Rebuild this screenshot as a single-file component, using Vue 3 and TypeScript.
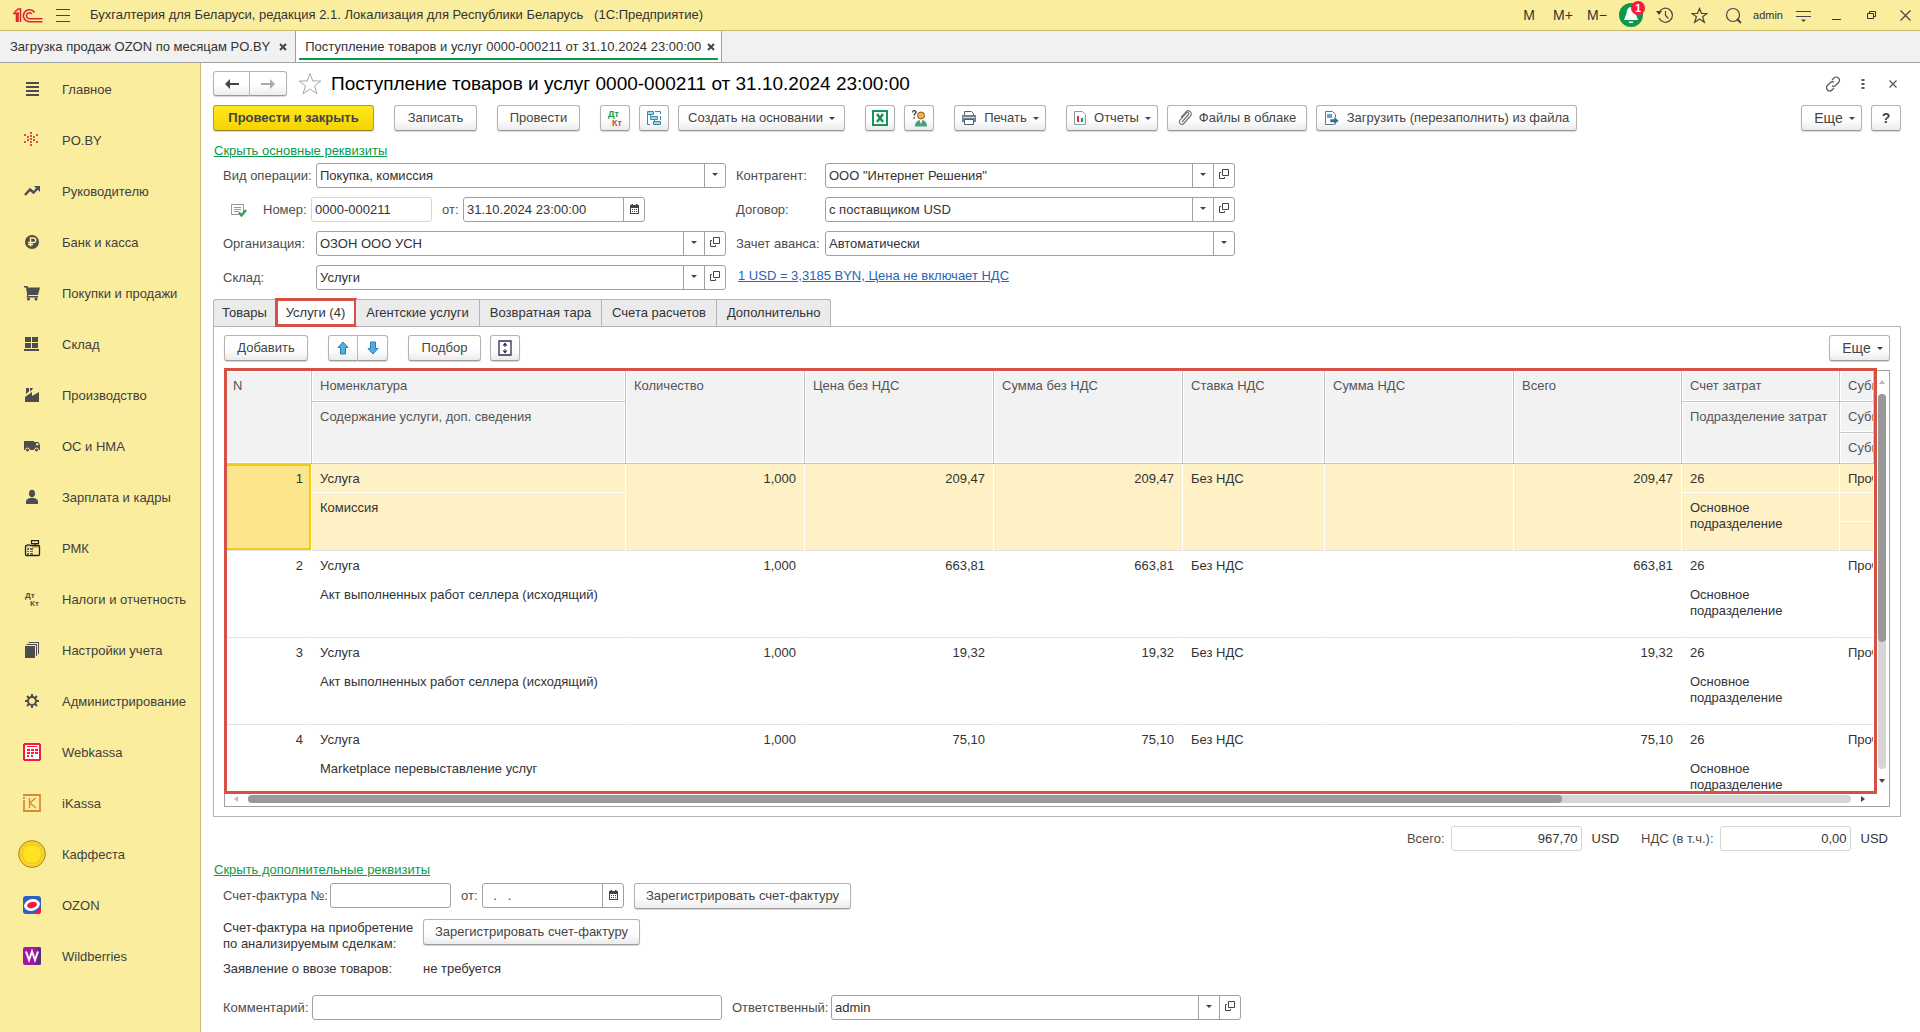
<script setup lang="ts">
import { ref } from 'vue'

interface Section {
  title: string
  icon: string
}

interface ServiceLine {
  n: number
  item: string
  note: string
  qty: string
  price: string
  amount: string
  rate: string
  total: string
  account: string
  department: string
  extra: string
}

const dark = '#4d4d4d'

const sections: Section[] = [
  { title: 'Главное', icon: `<path fill="${dark}" d="M8 7h13v2H8zM8 11h13v2H8zM8 15h13v2H8zM8 19h13v2H8z"/>` },
  {
    title: 'PO.BY',
    icon: '<path fill="#d9513f" d="M12 6h2v2h-2zM6 8h2v2H6zM18 8h2v2h-2zM9 10h2v2H9zM15 10h2v2h-2zM12 9h2v2h-2zM12 12h2v2h-2zM12 15h2v2h-2zM9 13h2v2H9zM15 13h2v2h-2zM6 15h2v2H6zM18 15h2v2h-2zM12 18h2v2h-2z"/>'
  },
  {
    title: 'Руководителю',
    icon: `<path fill="none" stroke="${dark}" stroke-width="2.400" d="M7 18l5-5.500 3.500 3L20 11"/><path fill="${dark}" d="M16 9h6v6z"/>`
  },
  {
    title: 'Банк и касса',
    icon: `<circle cx="14" cy="14" r="7" fill="${dark}"/><path fill="none" stroke="#faec9f" stroke-width="1.500" d="M12.500 18.500V10h3a2.200 2.200 0 0 1 0 4.500H10M10 16.500h5"/>`
  },
  {
    title: 'Покупки и продажи',
    icon: `<path fill="${dark}" d="M6 7h3.500l.5 1.500h12l-2 7.500H10.500l-.3 1H20v1.500H8.500l.7-2.800L8 8.500H6z"/><circle cx="10.500" cy="20" r="1.500" fill="${dark}"/><circle cx="18" cy="20" r="1.500" fill="${dark}"/>`
  },
  { title: 'Склад', icon: `<path fill="${dark}" d="M7 7h6v5H7zM14 7h6v5h-6zM7 13h6v5H7zM14 13h6v5h-6zM6 19h15v2H6z"/>` },
  { title: 'Производство', icon: `<path fill="${dark}" d="M7 21v-5l7-5v4l7-4v10zM8 7h3v3.500l-3 2.500zM12 7h3l-1 2-2 1.500z"/>` },
  {
    title: 'ОС и НМА',
    icon: `<path fill="${dark}" d="M6 9h10v9H6zM16 10h4.500l1.500 3v5h-6z"/><path fill="#faec9f" d="M18 11.300h2l.8 2H18z"/><circle cx="9.500" cy="18" r="2" fill="${dark}" stroke="#faec9f"/><circle cx="18.500" cy="18" r="2" fill="${dark}" stroke="#faec9f"/>`
  },
  {
    title: 'Зарплата и кадры',
    icon: `<ellipse cx="14" cy="10.500" rx="3" ry="3.800" fill="${dark}"/><path fill="${dark}" d="M8 21v-2.500q0-2.500 4-3.500h4q4 1 4 3.500V21z"/>`
  },
  {
    title: 'РМК',
    icon: '<rect x="7.500" y="11.500" width="14" height="10" rx="1" fill="#f6eaa6" stroke="#222" stroke-width="1.300"/><path fill="#faec9f" stroke="#222" stroke-width="1.200" d="M13.500 6.600h7v3h-7zM17 9.600v2"/><path fill="#6b6b57" d="M9 10h3v2H9zM9 14h6v7H9z"/><path stroke="#f6eaa6" d="M9 16.500h6M9 18.500h6M11.500 14v7"/><path fill="#a08c20" d="M14 12h7v1.500h-7z"/>'
  },
  {
    title: 'Налоги и отчетность',
    icon: `<g fill="${dark}" font-family="Liberation Sans, Arial, sans-serif" font-weight="700" font-size="8"><text x="7" y="13">Дт</text><text x="12" y="21">Кт</text></g>`
  },
  {
    title: 'Настройки учета',
    icon: `<path fill="${dark}" d="M7 10h10v12H7zM8.500 8H19v12h-1V9H8.500zM10.500 6H21v12h-1V7h-9.500z"/>`
  },
  {
    title: 'Администрирование',
    icon: `<circle cx="14" cy="14" r="4" fill="none" stroke="${dark}" stroke-width="2"/><path stroke="${dark}" stroke-width="2" d="M14 7v2.500M14 18.500V21M7 14h2.500M18.500 14H21M9 9l2 2M17 17l2 2M9 19l2-2M17 11l2-2"/>`
  },
  {
    title: 'Webkassa',
    icon: '<path fill="#fb1740" d="M6 5h16v1h1v16h-1v1H6v-1H5V6h1z"/><path fill="#fff" d="M7 7h14v14H7z"/><path fill="#fb1740" d="M9 8h10v1H9zM9 11h3v2H9zM13 11h3v2h-3zM17 11h3v2h-3zM9 14h3v2H9zM13 14h3v2h-3zM17 14h3v2h-3zM9 17h2v2H9zM13 17h2v2h-2z"/>'
  },
  {
    title: 'iKassa',
    icon: '<path fill="none" stroke="#d98a35" stroke-width="1.800" d="M5 6h17v16H6V11M6 8v2"/><path fill="none" stroke="#d98a35" stroke-width="1.400" d="M11.500 9v10M17.500 9l-5.500 5 6 5"/>'
  },
  {
    title: 'Каффеста',
    icon: '<circle cx="14" cy="14" r="13.400" fill="#fad02c" stroke="#a38a1c"/><circle cx="14" cy="14" r="9.500" fill="#ffe423" stroke="#f3c61a"/>'
  },
  {
    title: 'OZON',
    icon: '<rect x="5" y="5" width="18" height="18" rx="3" fill="#2a5fc4"/><path fill="#f7173c" d="M8 23c8 0 13-3 15-7v4a3 3 0 0 1-3 3z"/><ellipse cx="14" cy="14" rx="8" ry="5.800" fill="#fff" transform="rotate(-14 14 14)"/><ellipse cx="14" cy="14" rx="5" ry="3.200" fill="#f7173c" transform="rotate(-14 14 14)"/>'
  },
  {
    title: 'Wildberries',
    icon: '<rect x="5" y="5" width="18" height="18" rx="2" fill="#a017a5"/><path fill="#5c2a80" d="M20 5h1a2 2 0 0 1 2 2v14a2 2 0 0 1-2 2h-4z"/><path fill="none" stroke="#fff" stroke-width="2" d="M8 9.500l3 8.500 3-8.500 3 8.500 3-8.500"/>'
  }
]

const documentTabs = ['Товары', 'Услуги (4)', 'Агентские услуги', 'Возвратная тара', 'Счета расчетов', 'Дополнительно']
const activeTab = ref(1)
const selectedLine = ref(1)

const base = { item: 'Услуга', qty: '1,000', rate: 'Без НДС', account: '26', department: 'Основное подразделение', extra: 'Прочие затраты' }
const lines: ServiceLine[] = [
  { ...base, n: 1, note: 'Комиссия', price: '209,47', amount: '209,47', total: '209,47' },
  { ...base, n: 2, note: 'Акт выполненных работ селлера (исходящий)', price: '663,81', amount: '663,81', total: '663,81' },
  { ...base, n: 3, note: 'Акт выполненных работ селлера (исходящий)', price: '19,32', amount: '19,32', total: '19,32' },
  { ...base, n: 4, note: 'Marketplace перевыставление услуг', price: '75,10', amount: '75,10', total: '75,10' }
]
</script>

<template>
  <div class="app">
    <header class="titlebar">
      <svg class="logo" width="30" height="15" viewBox="0 0 30 15" fill="none" stroke="#e0262d" stroke-width="1.600">
        <path d="M0 5.500h3.500V14M1.500 4.500L5 1h2.500v13M5 4v10" />
        <path d="M21.500 4.500A6 6 0 1 0 16 13.700h13.500M18.800 5.800a3 3 0 1 0-2.300 4.900h13" />
      </svg>
      <button class="plain burger" aria-label="Меню">
        <svg width="14" height="16" viewBox="0 0 14 16" stroke="#444"><path d="M0 2.500h14M0 8.500h14M0 14.500h14" /></svg>
      </button>
      <span class="app-title">Бухгалтерия для Беларуси, редакция 2.1. Локализация для Республики Беларусь&nbsp;&nbsp; (1С:Предприятие)</span>
      <div class="title-actions">
        <button class="plain mem">M</button>
        <button class="plain mem">M+</button>
        <button class="plain mem">M−</button>
        <button class="plain bell" aria-label="Оповещения">
          <svg width="24" height="24" viewBox="0 0 24 24"><circle cx="12" cy="12" r="12" fill="#0b9a49" /><path fill="#fff" d="M12 4c3 0 4 3 4.500 6.500L19 17H5l2.500-6.500C8 7 9 4 12 4zM9.500 18.500h5l-1 1.500h-3z" /></svg>
          <span class="badge">1</span>
        </button>
        <button class="plain" aria-label="История">
          <svg width="18" height="18" viewBox="0 0 18 18" fill="none" stroke="#444" stroke-width="1.200"><path d="M3 6.500a7 7 0 1 1 0 5.500M9.500 5v4.500l3 3" /><path fill="#444" stroke="none" d="M0 5h6L3 9z" /></svg>
        </button>
        <button class="plain" aria-label="Избранное">
          <svg width="17" height="17" viewBox="0 0 17 17" fill="none" stroke="#444" stroke-width="1.200"><path d="M8.500 1.500l2 5h5.500l-4.400 3.300 1.700 5.400-4.800-3.300-4.800 3.300 1.700-5.400L1 6.500h5.500z" /></svg>
        </button>
        <button class="plain" aria-label="Поиск">
          <svg width="17" height="17" viewBox="0 0 17 17" fill="none" stroke="#444" stroke-width="1.200"><circle cx="8" cy="8" r="6.500" /><path stroke-width="2" d="M12 12l4 4" /></svg>
        </button>
        <button class="plain user">admin</button>
        <button class="plain" aria-label="Сервис">
          <svg width="15" height="15" viewBox="0 0 15 15"><path stroke="#444" stroke-width="1.200" d="M0 3.500h15M0 8.500h15" /><path fill="#444" d="M5 11.500h5L7.500 14z" /></svg>
        </button>
        <button class="plain" aria-label="Свернуть">
          <svg width="10" height="10" viewBox="0 0 10 10" stroke="#333"><path d="M0 9.500h9" /></svg>
        </button>
        <button class="plain restore" aria-label="Восстановить">
          <svg width="10" height="10" viewBox="0 0 10 10" fill="none" stroke="#333"><path d="M.5 3.500h6v5h-6zM2.500 3V1.500h6v5H7" /></svg>
        </button>
        <button class="plain close" aria-label="Закрыть">
          <svg width="11" height="11" viewBox="0 0 11 11" stroke="#444" stroke-width="1.200"><path d="M.5.5l10 10M10.500.5l-10 10" /></svg>
        </button>
      </div>
    </header>

    <nav class="windows">
      <div class="window-tab">
        <a href="#ozon">Загрузка продаж OZON по месяцам PO.BY</a>
        <button class="plain" aria-label="Закрыть вкладку"><svg width="8" height="8" viewBox="0 0 8 8" stroke="#444" stroke-width="2"><path d="M1 1l6 6M7 1L1 7" /></svg></button>
      </div>
      <div class="window-tab current">
        <a href="#receipt">Поступление товаров и услуг 0000-000211 от 31.10.2024 23:00:00</a>
        <button class="plain" aria-label="Закрыть вкладку"><svg width="8" height="8" viewBox="0 0 8 8" stroke="#444" stroke-width="2"><path d="M1 1l6 6M7 1L1 7" /></svg></button>
      </div>
    </nav>

    <div class="workspace">
      <aside class="sidebar">
        <a v-for="s in sections" :key="s.title" href="#section" class="section">
          <svg width="28" height="29" viewBox="0 0 28 29" v-html="s.icon"></svg>
          <span>{{ s.title }}</span>
        </a>
      </aside>

      <main class="document">
        <div class="doc-head">
          <div class="btn-group">
            <button class="btn history" aria-label="Назад"><svg width="16" height="12" viewBox="0 0 16 12"><path fill="#444" d="M1 6l5-5v4h9v2H6v4z" /></svg></button>
            <button class="btn history" aria-label="Вперед"><svg width="16" height="12" viewBox="0 0 16 12"><path fill="#aaa" d="M15 6l-5-5v4H1v2h9v4z" /></svg></button>
          </div>
          <button class="plain fav" aria-label="В избранное">
            <svg width="24" height="24" viewBox="0 0 24 24" fill="#fff" stroke="#a8a8a8"><path d="M12 1.500l2.800 7.500h8l-6.300 4.800 2.400 8-6.900-4.800-6.900 4.800 2.400-8L1.200 9h8z" /></svg>
          </button>
          <h1>Поступление товаров и услуг 0000-000211 от 31.10.2024 23:00:00</h1>
          <div class="head-tools">
            <button class="plain" aria-label="Ссылка">
              <svg width="16" height="16" viewBox="0 0 16 16" fill="none" stroke="#555" stroke-width="1.200"><path d="M7 4l2-2a3 3 0 0 1 4.500 0 3 3 0 0 1 0 4.500L10.500 9.500a3 3 0 0 1-3.500.3M9 12l-2 2a3 3 0 0 1-4.500 0 3 3 0 0 1 0-4.500L5.500 6.500A3 3 0 0 1 9 6.200" /></svg>
            </button>
            <button class="plain" aria-label="Действия"><svg width="4" height="12" viewBox="0 0 4 12" fill="#555"><path d="M.5 1h3v2h-3zM.5 5h3v2h-3zM.5 9h3v2h-3z" /></svg></button>
            <button class="plain" aria-label="Закрыть"><svg width="8" height="8" viewBox="0 0 8 8" stroke="#555" stroke-width="1.200"><path d="M.5.5l7 7M7.500.5l-7 7" /></svg></button>
          </div>
        </div>

        <div class="toolbar">
          <button class="btn primary">Провести и закрыть</button>
          <button class="btn w83 g20">Записать</button>
          <button class="btn w83 g20">Провести</button>
          <button class="btn icon g20" aria-label="Проводки">
            <svg width="20" height="18" viewBox="0 0 20 18" font-family="Liberation Sans, Arial, sans-serif" font-weight="700" font-size="9"><text x="3" y="8" fill="#0b9a49">Дт</text><text x="7" y="17" fill="#d04a35">Кт</text></svg>
          </button>
          <button class="btn icon g9" aria-label="Структура подчиненности">
            <svg width="16" height="16" viewBox="0 0 16 16"><path fill="none" stroke="#3b84ab" d="M1.500 5v9.500H4M9 1.500h5.500V4M14.500 6v4M4.500 4v2M8.500 8v3" /><g fill="#a9d3e6" stroke="#3b84ab"><path d="M1.500 1.500h6v3h-6zM4.500 6.500h7v3h-7zM7.500 11.500h7v3h-7z" /></g></svg>
          </button>
          <button class="btn w167 g9">Создать на основании<i class="caret"></i></button>
          <button class="btn icon g20" aria-label="Excel">
            <svg width="16" height="16" viewBox="0 0 16 16"><path fill="#fff" stroke="#169552" stroke-width="2" d="M1 1h14v14H1z" /><path stroke="#169552" stroke-width="2.500" d="M5 4l6 8M11 4l-6 8" /></svg>
          </button>
          <button class="btn icon g9" aria-label="Помощь">
            <svg width="16" height="18" viewBox="0 0 16 18"><path fill="none" stroke="#333" stroke-width="1.300" d="M1.500 3.500C1.500 1 5 1 5 3.200c0 1.300-1.800 1.400-1.800 3.300M3.200 8v1.500" /><circle cx="10" cy="6.500" r="3.500" fill="#f3ae52" stroke="#8c5a16" /><path fill="#4aa079" d="M4 17.500c0-5 3-6.500 6-6.500s6 1.500 6 6.500z" /><path fill="#fff" d="M8.500 11h3L10 15z" /></svg>
          </button>
          <button class="btn w92 g20">
            <svg width="16" height="16" viewBox="0 0 16 16"><path fill="#fff" stroke="#4a5f70" d="M3.500 5V1.500h7l2 2V5" /><path fill="#6c8496" d="M1 5h14v7H1z" /><path fill="#fff" stroke="#4a5f70" d="M3.500 9.500h9v5h-9z" /><path stroke="#cfd9e0" d="M2 7.500h12" /></svg>
            <span>Печать</span><i class="caret"></i>
          </button>
          <button class="btn w92 g20">
            <svg width="14" height="16" viewBox="0 0 14 16"><path fill="#fff" stroke="#8f9aa3" d="M1.500 1.500h8l3 3v10h-11z" /><path fill="#d8324a" d="M4 6h2v6H4z" /><path fill="#1a9c52" d="M8 8h2v4H8z" /></svg>
            <span>Отчеты</span><i class="caret"></i>
          </button>
          <button class="btn w140 g9">
            <svg width="14" height="16" viewBox="0 0 14 16" fill="none" stroke="#777" stroke-width="1.200"><path d="M4 12l6.500-7.500a1.300 1.300 0 0 0-2-1.700L2 10.200a2.500 2.500 0 0 0 3.800 3.300L12.500 6a3 3 0 0 0-4.500-4.200L3 7.500" /></svg>
            <span>Файлы в облаке</span>
          </button>
          <button class="btn w261 g9">
            <svg width="16" height="16" viewBox="0 0 16 16"><path fill="#fff" stroke="#5d7787" d="M1.500 1.500h7l3 3v10h-10z" /><path fill="#5aa9cf" d="M3 4h5v4H3z" /><path fill="#2c6f9c" stroke="#fff" stroke-width=".6" d="M6 9h4V6.500l5 4.300-5 4.200v-2.500H6z" /></svg>
            <span>Загрузить (перезаполнить) из файла</span>
          </button>
          <button class="btn more push">Еще<i class="caret"></i></button>
          <button class="btn icon g9 help">?</button>
        </div>

        <a href="#main-props" class="toggle">Скрыть основные реквизиты</a>

        <div class="form">
          <div class="row">
            <label for="op" class="lbl-a">Вид операции:</label>
            <div class="field wide">
              <select id="op"><option>Покупка, комиссия</option></select><span class="cell"><i class="caret"></i></span>
            </div>
            <label for="partner" class="lbl-b">Контрагент:</label>
            <div class="field wide">
              <select id="partner"><option>ООО "Интернет Решения"</option></select><span class="cell"><i class="caret"></i></span>
              <button class="cell" aria-label="Открыть"><svg width="10" height="11" viewBox="0 0 10 11" fill="none" stroke="#444"><path d="M3.500.5h6v6h-6zM2 3.500H.5v6h5V8" /></svg></button>
            </div>
          </div>
          <div class="row">
            <div class="lbl-num">
              <svg width="16" height="16" viewBox="0 0 16 16"><path fill="#fff" stroke="#999" d="M.5 2.500h12v10H.5z" /><path stroke="#999" d="M3 5.500h7M3 7.500h7M3 9.500h5" /><path fill="none" stroke="#2a9c55" stroke-width="2.200" d="M8 10.500l2.500 3L15 8" /></svg>
              <label for="num">Номер:</label>
            </div>
            <div class="field soft num"><input id="num" value="0000-000211" /></div>
            <label for="date" class="lbl-from">от:</label>
            <div class="field date">
              <input id="date" value="31.10.2024 23:00:00" />
              <button class="cell" aria-label="Календарь"><svg width="9" height="10" viewBox="0 0 9 10"><path fill="#444" d="M0 1h1.500V0H3v1h3V0h1.500v1H9v9H0z" /><path fill="#fff" d="M1 4h7v5H1z" /><path stroke="#444" stroke-dasharray="1 1" d="M2 5.500h5M2 7.500h5" /></svg></button>
            </div>
            <label for="contract" class="lbl-b second">Договор:</label>
            <div class="field wide">
              <select id="contract"><option>с поставщиком USD</option></select><span class="cell"><i class="caret"></i></span>
              <button class="cell" aria-label="Открыть"><svg width="10" height="11" viewBox="0 0 10 11" fill="none" stroke="#444"><path d="M3.500.5h6v6h-6zM2 3.500H.5v6h5V8" /></svg></button>
            </div>
          </div>
          <div class="row">
            <label for="org" class="lbl-a">Организация:</label>
            <div class="field wide">
              <select id="org"><option>ОЗОН ООО УСН</option></select><span class="cell"><i class="caret"></i></span>
              <button class="cell" aria-label="Открыть"><svg width="10" height="11" viewBox="0 0 10 11" fill="none" stroke="#444"><path d="M3.500.5h6v6h-6zM2 3.500H.5v6h5V8" /></svg></button>
            </div>
            <label for="advance" class="lbl-b">Зачет аванса:</label>
            <div class="field wide">
              <select id="advance"><option>Автоматически</option></select><span class="cell"><i class="caret"></i></span>
            </div>
          </div>
          <div class="row">
            <label for="stock" class="lbl-a">Склад:</label>
            <div class="field wide">
              <select id="stock"><option>Услуги</option></select><span class="cell"><i class="caret"></i></span>
              <button class="cell" aria-label="Открыть"><svg width="10" height="11" viewBox="0 0 10 11" fill="none" stroke="#444"><path d="M3.500.5h6v6h-6zM2 3.500H.5v6h5V8" /></svg></button>
            </div>
            <a href="#rate" class="rate">1 USD = 3,3185 BYN, Цена не включает НДС</a>
          </div>
        </div>

        <div class="tabs">
          <button v-for="(t, i) in documentTabs" :key="t" class="tab" :class="{ active: i === activeTab }" @click="activeTab = i">{{ t }}</button>
        </div>

        <section class="panel">
          <div class="toolbar inner">
            <button class="btn w84">Добавить</button>
            <div class="btn-group g20">
              <button class="btn icon" aria-label="Вверх"><svg width="12" height="14" viewBox="0 0 12 14"><path fill="#53aee6" stroke="#2b7fb5" d="M6 1l5 5.500H8.500V13h-5V6.500H1z" /></svg></button>
              <button class="btn icon" aria-label="Вниз"><svg width="12" height="14" viewBox="0 0 12 14"><path fill="#53aee6" stroke="#2b7fb5" d="M6 13l5-5.500H8.500V1h-5v6.500H1z" /></svg></button>
            </div>
            <button class="btn w73 g20">Подбор</button>
            <button class="btn icon g9" aria-label="Высота строк"><svg width="16" height="16" viewBox="0 0 16 16"><path fill="#fff" stroke="#2c2c55" stroke-width="1.300" d="M2 1h12v14H2z" /><path fill="#2c2c55" d="M8 2.500l2.500 3h-5zM8 13.500l2.500-3h-5zM7.500 5h1v2h-1zM7.500 9h1v2h-1z" /></svg></button>
            <button class="btn more push">Еще<i class="caret"></i></button>
          </div>

          <div class="grid">
            <div class="grid-main">
              <div class="viewport">
                <table>
                  <colgroup>
                    <col class="c-n" /><col class="c-item" /><col class="c-qty" /><col class="c-sum" /><col class="c-sum" /><col class="c-rate" /><col class="c-sum" /><col class="c-total" /><col class="c-acc" /><col />
                  </colgroup>
                  <thead>
                    <tr>
                      <th rowspan="3">N</th><th>Номенклатура</th><th rowspan="3">Количество</th><th rowspan="3">Цена без НДС</th><th rowspan="3">Сумма без НДС</th>
                      <th rowspan="3">Ставка НДС</th><th rowspan="3">Сумма НДС</th><th rowspan="3">Всего</th><th>Счет затрат</th><th>Субконто 1</th>
                    </tr>
                    <tr><th rowspan="2">Содержание услуги, доп. сведения</th><th rowspan="2">Подразделение затрат</th><th>Субконто 2</th></tr>
                    <tr><th>Субконто 3</th></tr>
                  </thead>
                  <tbody v-for="l in lines" :key="l.n" :class="{ selected: l.n === selectedLine }" @click="selectedLine = l.n">
                    <tr>
                      <td rowspan="3" class="r num-cell last">{{ l.n }}</td>
                      <td>{{ l.item }}</td>
                      <td rowspan="3" class="r last">{{ l.qty }}</td>
                      <td rowspan="3" class="r last">{{ l.price }}</td>
                      <td rowspan="3" class="r last">{{ l.amount }}</td>
                      <td rowspan="3" class="last">{{ l.rate }}</td>
                      <td rowspan="3" class="last"></td>
                      <td rowspan="3" class="r last">{{ l.total }}</td>
                      <td>{{ l.account }}</td>
                      <td>{{ l.extra }}</td>
                    </tr>
                    <tr><td rowspan="2" class="last">{{ l.note }}</td><td rowspan="2" class="last wrap">{{ l.department }}</td><td></td></tr>
                    <tr><td class="last"></td></tr>
                  </tbody>
                </table>
              </div>
              <div class="vscroll">
                <i class="arrow up"></i>
                <div class="track"><div class="thumb"></div></div>
                <i class="arrow down"></i>
              </div>
              <div class="frame"></div>
            </div>
            <div class="hscroll">
              <i class="arrow left"></i>
              <div class="track"><div class="thumb"></div></div>
              <i class="arrow right"></i>
            </div>
          </div>
        </section>

        <div class="totals">
          <label for="sum">Всего:</label>
          <div class="field soft"><input id="sum" value="967,70" /></div>
          <span class="cur">USD</span>
          <label for="vat" class="vat">НДС (в т.ч.):</label>
          <div class="field soft"><input id="vat" value="0,00" /></div>
          <span class="cur">USD</span>
        </div>

        <a href="#extra-props" class="toggle extra">Скрыть дополнительные реквизиты</a>

        <div class="row invoice">
          <label for="inv" class="lbl-inv">Счет-фактура №:</label>
          <div class="field num"><input id="inv" value="" /></div>
          <label for="inv-date" class="lbl-from">от:</label>
          <div class="field inv-date">
            <input id="inv-date" value="  .   ." />
            <button class="cell" aria-label="Календарь"><svg width="9" height="10" viewBox="0 0 9 10"><path fill="#444" d="M0 1h1.500V0H3v1h3V0h1.500v1H9v9H0z" /><path fill="#fff" d="M1 4h7v5H1z" /><path stroke="#444" stroke-dasharray="1 1" d="M2 5.500h5M2 7.500h5" /></svg></button>
          </div>
          <button class="btn register">Зарегистрировать счет-фактуру</button>
        </div>
        <div class="row deal">
          <span class="lbl-deal">Счет-фактура на приобретение<br />по анализируемым сделкам:</span>
          <button class="btn register">Зарегистрировать счет-фактуру</button>
        </div>
        <div class="row import">
          <span class="lbl-deal">Заявление о ввозе товаров:</span>
          <span class="value">не требуется</span>
        </div>
        <div class="row comment">
          <label for="comment" class="lbl-com">Комментарий:</label>
          <div class="field wide"><input id="comment" value="" /></div>
          <label for="resp" class="lbl-resp">Ответственный:</label>
          <div class="field wide">
            <select id="resp"><option>admin</option></select><span class="cell"><i class="caret"></i></span>
            <button class="cell" aria-label="Открыть"><svg width="10" height="11" viewBox="0 0 10 11" fill="none" stroke="#444"><path d="M3.500.5h6v6h-6zM2 3.500H.5v6h5V8" /></svg></button>
          </div>
        </div>
      </main>
    </div>
  </div>
</template>

<style>
body {
  margin: 0;
  background: #fff;
}
</style>

<style scoped>
.app {
  display: flex;
  flex-direction: column;
  min-height: 100vh;
  font: 13px/16px "Liberation Sans", Arial, sans-serif;
  color: #333;
}
.app *,
.app {
  box-sizing: border-box;
}
button,
input,
select {
  font: inherit;
  color: inherit;
  margin: 0;
}
svg {
  flex: none;
  display: block;
}
.plain {
  display: flex;
  align-items: center;
  justify-content: center;
  padding: 0;
  border: 0;
  background: none;
}

/* window title */
.titlebar {
  display: flex;
  align-items: center;
  height: 31px;
  padding-left: 13px;
  background: #fbed9e;
  border-bottom: 1px solid #c9bb6c;
}
.burger {
  width: 14px;
  margin: 0 20px 0 13px;
}
.app-title {
  white-space: nowrap;
}
.title-actions {
  display: flex;
  align-items: center;
  margin-left: auto;
}
.title-actions .plain {
  width: 34px;
  height: 30px;
}
.title-actions .mem {
  font-size: 14px;
}
.title-actions .user {
  width: 36px;
  font-size: 11px;
}
.title-actions .restore {
  width: 36px;
}
.title-actions .close {
  width: 30px;
}
.bell {
  position: relative;
}
.badge {
  position: absolute;
  top: 1px;
  right: 3px;
  width: 14px;
  height: 14px;
  border-radius: 7px;
  background: #fb1740;
  color: #fff;
  font-size: 11px;
  font-weight: 700;
  line-height: 14px;
  text-align: center;
}

/* open windows */
.windows {
  display: flex;
  height: 32px;
  background: #f1f1f1;
  border-bottom: 1px solid #a0a0a0;
}
.window-tab {
  display: flex;
  align-items: center;
  gap: 9px;
  padding: 0 8px 0 10px;
  border-right: 1px solid #a0a0a0;
}
.window-tab a {
  color: inherit;
  text-decoration: none;
  white-space: nowrap;
}
.window-tab.current {
  position: relative;
  gap: 6px;
  padding: 0 6px 0 9px;
  background: #fff;
}
.window-tab.current::after {
  content: "";
  position: absolute;
  left: 3px;
  right: 3px;
  bottom: 2px;
  height: 2px;
  background: #0b9a49;
}

.workspace {
  display: flex;
  flex: 1;
}
.sidebar {
  flex: none;
  width: 201px;
  padding-top: 1px;
  background: #fbed9e;
  border-right: 1px solid #c9bb6c;
}
.section {
  display: flex;
  align-items: center;
  gap: 16px;
  height: 51px;
  padding-left: 18px;
  color: #404040;
  text-decoration: none;
  white-space: nowrap;
}

.document {
  flex: 1;
  min-width: 0;
  padding: 8px 19px 11px 12px;
}
.doc-head {
  display: flex;
  align-items: center;
  height: 25px;
}
.fav {
  margin: 0 9px 0 11px;
}
h1 {
  margin: 0;
  font-size: 19px;
  line-height: 24px;
  font-weight: 400;
  color: #000;
  white-space: nowrap;
}
.head-tools {
  display: flex;
  align-items: center;
  gap: 20px;
  margin-left: auto;
  padding-right: 4px;
}
.head-tools .plain:last-child {
  margin-left: 4px;
}

.btn {
  display: flex;
  align-items: center;
  justify-content: center;
  height: 26px;
  padding: 0 4px;
  border: 1px solid #b3b3b3;
  border-bottom-color: #999;
  border-radius: 3px;
  background: linear-gradient(#fff 55%, #ececec);
  box-shadow: 0 1px 1px #d8d8d8;
  color: #444;
  white-space: nowrap;
}
.btn > svg + span {
  margin-left: 7px;
}
.btn.icon {
  width: 30px;
  padding: 0;
}
.btn.history {
  width: 37px;
  height: 25px;
}
.btn.primary {
  width: 161px;
  background: linear-gradient(#ffe81f, #f5d300);
  border-color: #b59f1e;
  border-bottom-color: #97851b;
  font-weight: 700;
}
.btn.help {
  font-size: 14px;
  font-weight: 700;
}
.btn.more {
  width: 61px;
  font-size: 14px;
  padding-left: 10px;
}
.btn-group {
  display: flex;
}
.btn-group .btn:first-child {
  border-radius: 3px 0 0 3px;
}
.btn-group .btn:last-child {
  border-left: 0;
  border-radius: 0 3px 3px 0;
}
.w84 { width: 84px; }
.w83 { width: 83px; }
.w73 { width: 73px; }
.w167 { width: 167px; }
.w92 { width: 92px; }
.w140 { width: 140px; }
.w261 { width: 261px; }
.g9 { margin-left: 9px; }
.g20 { margin-left: 20px; }
.push { margin-left: auto; }
.caret {
  flex: none;
  width: 0;
  height: 0;
  border: 3px solid transparent;
  border-top-color: #444;
  border-bottom: 0;
}
.btn .caret {
  margin-left: 6px;
}
.toolbar {
  display: flex;
  margin-top: 9px;
}

.toggle {
  display: block;
  width: max-content;
  margin: 12px 0 4px 1px;
  color: #0b9a49;
}

.form {
  display: flex;
  flex-direction: column;
  gap: 9px;
}
.row {
  display: flex;
  align-items: center;
  height: 25px;
  padding-left: 10px;
  white-space: nowrap;
}
.row label {
  flex: none;
  color: #4d4d4d;
}
.lbl-a { width: 93px; }
.lbl-b { width: 89px; }
.lbl-b, .lbl-resp { margin-left: 10px; }
.rate { color: #2a63b5; margin: 0 0 4px 12px; }
.lbl-num {
  display: flex;
  align-items: center;
  gap: 16px;
  width: 88px;
  padding-left: 8px;
}
.lbl-from { width: 21px; margin-left: 10px; }
.lbl-b.second { margin-left: 91px; }
.field {
  display: flex;
  flex: none;
  height: 25px;
  border: 1px solid #a0a0a0;
  border-radius: 3px;
  background: #fff;
  overflow: hidden;
}
.field.wide { width: 410px; }
.field.num { width: 121px; }
.field.date { width: 182px; }
.field.inv-date { width: 142px; }
.field.soft { border-color: #d4d4d4; }
.field input,
.field select {
  flex: 1;
  min-width: 0;
  padding: 0 3px;
  border: 0;
  outline: 0;
  background: none;
  appearance: none;
}
.cell {
  display: flex;
  align-items: center;
  justify-content: center;
  flex: none;
  width: 21px;
  padding: 0 0 2px;
  border: 0;
  border-left: 1px solid #a0a0a0;
  background: none;
  pointer-events: none;
}
button.cell {
  pointer-events: auto;
}

/* document tabs */
.tabs {
  display: flex;
  margin-top: 9px;
}
.tab {
  height: 27px;
  padding: 0 10px;
  border: 1px solid #b3b3b3;
  border-bottom: 0;
  border-left-width: 0;
  background: #ebebeb;
  white-space: nowrap;
}
.tab:first-child {
  padding: 0 8px;
  border-left-width: 1px;
  border-radius: 3px 0 0 0;
}
.tab:last-child {
  border-radius: 0 3px 0 0;
}
.tab.active {
  background: #fff;
  outline: 3px solid #d65045;
  outline-offset: -2px;
}
.panel {
  padding: 8px 10px 9px;
  border: 1px solid #b3b3b3;
}
.toolbar.inner {
  margin: 0 0 9px;
}

.grid {
  border: 1px solid #a0a0a0;
}
.grid-main {
  position: relative;
  display: flex;
  height: 422px;
}
.viewport {
  flex: 1;
  min-width: 0;
  overflow: hidden;
}
.frame {
  position: absolute;
  inset: -3px 12px -1px -1px;
  border: 3px solid #d65045;
  pointer-events: none;
}
table {
  width: 100%;
  table-layout: fixed;
  border-collapse: separate;
  border-spacing: 0;
}
.c-n { width: 87px; }
.c-item { width: 314px; }
.c-qty { width: 179px; }
.c-sum { width: 189px; }
.c-rate { width: 142px; }
.c-total { width: 168px; }
.c-acc { width: 158px; }
th,
td {
  padding: 7px 8px 0;
  vertical-align: top;
  text-align: left;
  font-weight: 400;
  white-space: nowrap;
  overflow: hidden;
}
th {
  height: 31px;
  border-right: 1px solid #c4c4c4;
  border-bottom: 1px solid #c4c4c4;
  background: #f2f2f2;
  box-shadow: inset 0 0 0 1px #fff;
  color: #555;
}
td {
  height: 29px;
  border-right: 1px solid transparent;
  border-bottom: 1px solid transparent;
}
td.r { text-align: right; }
td.wrap { white-space: normal; }
td.last { border-bottom-color: #e3e3e3; }
.selected td {
  background: #fdf1c5;
  background-clip: padding-box;
}
.selected td.num-cell {
  background: #fde58d;
  background-clip: padding-box;
  box-shadow: inset 0 0 0 2px #f3cb14;
}

.track {
  border-radius: 4px;
  background: #d6d6d6;
}
.thumb {
  border-radius: 4px;
  background: #999;
}
.vscroll {
  display: flex;
  flex-direction: column;
  align-items: center;
  width: 15px;
  padding: 9px 0 10px;
}
.vscroll .track {
  flex: 1;
  width: 8px;
  margin: 10px 0;
}
.vscroll .thumb { height: 66%; }
.hscroll {
  display: flex;
  align-items: flex-start;
  height: 13px;
  padding: 2px 24px 0 9px;
}
.hscroll .track {
  flex: 1;
  height: 8px;
  margin: 0 10px;
}
.hscroll .arrow { margin-top: 1px; }
.hscroll .thumb {
  width: 82%;
  height: 8px;
}
.arrow {
  width: 0;
  height: 0;
  border: 3px solid transparent;
}
.arrow.up { border-top: 0; border-bottom: 4px solid #bbb; }
.arrow.down { border-bottom: 0; border-top: 4px solid #444; }
.arrow.left { border-left: 0; border-right: 4px solid #bbb; }
.arrow.right { border-right: 0; border-left: 4px solid #444; }

.totals {
  display: flex;
  align-items: center;
  justify-content: flex-end;
  margin: 9px 13px 0 0;
  color: #4d4d4d;
}
.totals .field {
  width: 131px;
  margin: 0 10px 0 6px;
  color: #333;
}
.totals input { text-align: right; }
.totals .cur { color: #333; }
.totals .vat { margin-left: 22px; }

.toggle.extra { margin: 11px 0 5px 1px; }
.lbl-inv { width: 107px; }
.btn.register { width: 217px; }
.invoice .register { margin-left: 10px; }
.lbl-deal { width: 200px; }
.row.deal { height: 33px; margin-top: 11px; }
.deal .register { align-self: flex-start; }
.row.import { height: 16px; margin-top: 9px; }
.row.comment { margin-top: 18px; }
.lbl-com { width: 89px; }
.lbl-resp { width: 99px; }
</style>
